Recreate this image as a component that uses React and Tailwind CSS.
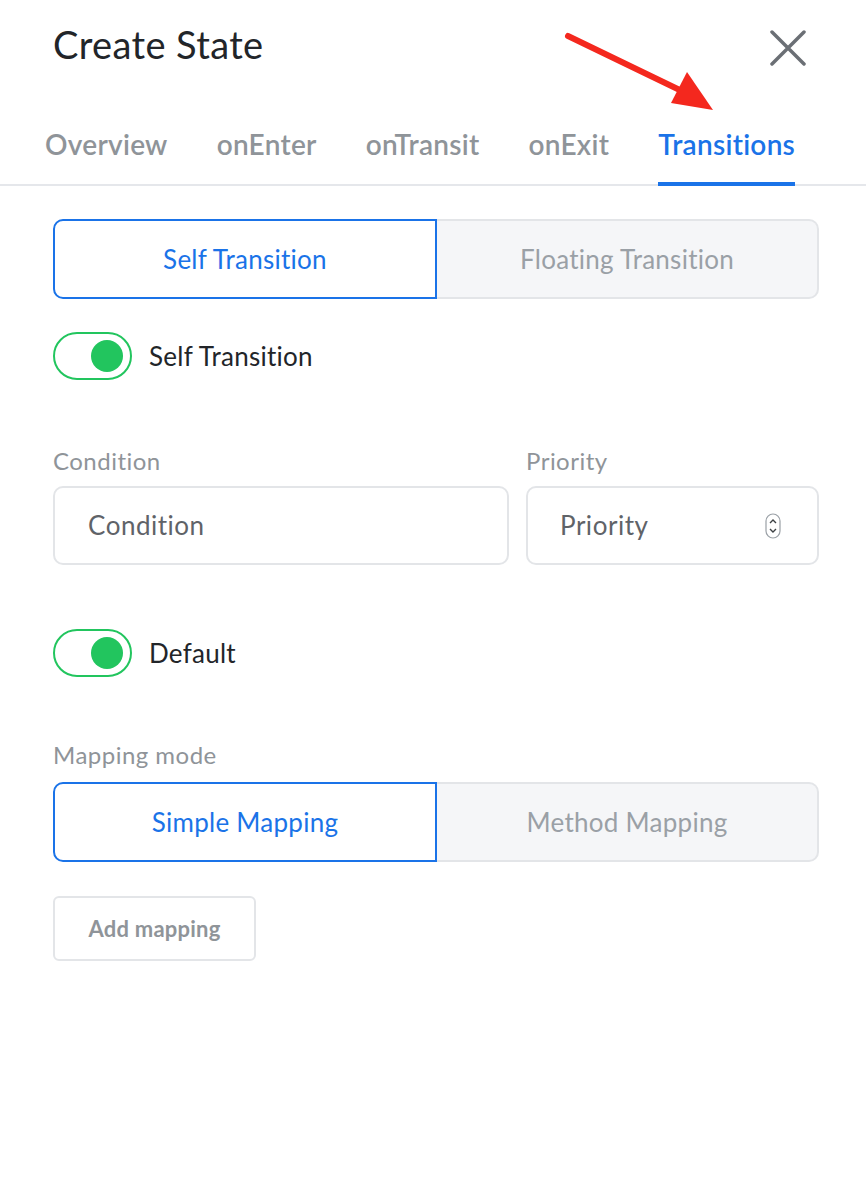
import React, { useState } from 'react';

const font = { fontFamily: 'Lato, "Open Sans", sans-serif' };

const tabs = ['Overview', 'onEnter', 'onTransit', 'onExit', 'Transitions'];

const Segmented = ({ left, right }) => (
  <div className="flex h-[80px]">
    <div className="flex-1 flex items-center justify-center border-2 border-[#1a73e8] rounded-l-[10px] bg-white text-[26px] tracking-[0.01em] text-[#1a73e8]">
      {left}
    </div>
    <div className="flex-1 flex items-center justify-center border-2 border-l-0 border-[#e3e5e8] rounded-r-[10px] bg-[#f5f6f8] text-[26px] tracking-[0.01em] text-[#9aa0a6]">
      {right}
    </div>
  </div>
);

const Toggle = ({ label }) => (
  <div className="flex items-center gap-[17px]">
    <div className="w-[79px] h-[48px] rounded-full border-2 border-[#22c55e] flex items-center justify-end pr-[7px]">
      <div className="w-[32px] h-[32px] rounded-full bg-[#22c55e]" />
    </div>
    <span className="text-[26px] tracking-[0.01em] leading-[32px] text-[#222529]">{label}</span>
  </div>
);

export default function App() {
  const [active] = useState('Transitions');

  return (
    <div className="w-[866px] h-[1202px] bg-white relative" style={font}>
      {/* Header */}
      <div className="flex justify-between items-start px-[53px] pt-[22px] pr-[60px]">
        <h1 className="text-[38px] text-[#222529] leading-[44px] tracking-[0.01em]">Create State</h1>
        <svg width="36" height="36" viewBox="0 0 36 36" className="mt-[8px]">
          <path d="M2 2 L34 34 M34 2 L2 34" stroke="#6b6f75" strokeWidth="3.5" strokeLinecap="round" />
        </svg>
      </div>

      {/* Arrow annotation */}
      <svg className="absolute left-[560px] top-[28px]" width="170" height="95" viewBox="0 0 170 95">
        <line x1="8" y1="8" x2="128" y2="66" stroke="#f4281e" strokeWidth="6" strokeLinecap="round" />
        <polygon points="153,82 111,75 127,44" fill="#f4281e" />
      </svg>

      {/* Tabs */}
      <div className="mt-[62px] border-b-2 border-[#e5e7eb] flex gap-[49px] pl-[45px]">
        {tabs.map((t) => (
          <div
            key={t}
            className={`pb-[22px] text-[28px] font-semibold tracking-[0.01em] leading-[32px] border-b-[4px] -mb-[2px] ${
              t === active ? 'text-[#1a73e8] border-[#1a73e8]' : 'text-[#8f9499] border-transparent'
            }`}
          >
            {t}
          </div>
        ))}
      </div>

      <div className="px-[53px] pr-[47px] pt-[33px]">
        <Segmented left="Self Transition" right="Floating Transition" />

        <div className="mt-[33px]">
          <Toggle label="Self Transition" />
        </div>

        {/* Condition / Priority */}
        <div className="mt-[66px] flex gap-[17px]">
          <div className="flex-1 flex flex-col">
            <label className="text-[24px] tracking-[0.02em] leading-[30px] text-[#8f9499] mb-[10px]">Condition</label>
            <div className="h-[79px] border-2 border-[#e3e5e8] rounded-[10px] flex items-center px-[33px] text-[26px] tracking-[0.02em] text-[#5f6368]">
              Condition
            </div>
          </div>
          <div className="w-[293px] flex flex-col">
            <label className="text-[24px] tracking-[0.02em] leading-[30px] text-[#8f9499] mb-[10px]">Priority</label>
            <div className="h-[79px] border-2 border-[#e3e5e8] rounded-[10px] flex items-center justify-between pl-[32px] pr-[36px] text-[26px] tracking-[0.02em] text-[#5f6368]">
              <span>Priority</span>
              <svg width="16" height="26" viewBox="0 0 16 26">
                <rect x="1" y="1" width="14" height="24" rx="7" fill="none" stroke="#9aa0a6" strokeWidth="1.2" />
                <path d="M5 10 L8 7 L11 10 M5 16 L8 19 L11 16" fill="none" stroke="#3c4043" strokeWidth="1.4" />
              </svg>
            </div>
          </div>
        </div>

        <div className="mt-[64px]">
          <Toggle label="Default" />
        </div>

        <div className="mt-[63px]">
          <label className="block text-[24px] tracking-[0.02em] leading-[30px] text-[#8f9499] mb-[12px]">Mapping mode</label>
          <Segmented left="Simple Mapping" right="Method Mapping" />
        </div>

        <button className="mt-[34px] w-[203px] h-[65px] border-2 border-[#e3e5e8] rounded-[6px] text-[22px] tracking-[0.01em] font-bold text-[#8f9499] bg-white">
          Add mapping
        </button>
      </div>
    </div>
  );
}
